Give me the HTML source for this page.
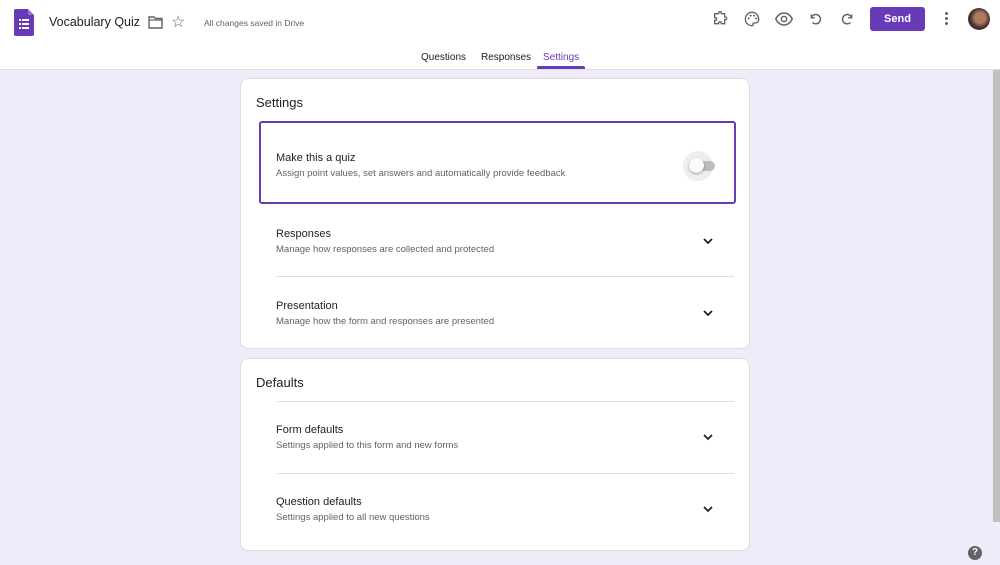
<!DOCTYPE html>
<html><head><style>
*{box-sizing:border-box;margin:0;padding:0}
body{width:1000px;height:565px;overflow:hidden;background:#f0ebf8;font-family:"Liberation Sans",Arial,sans-serif;color:#202124;position:relative}
.hdr{position:absolute;left:0;top:0;width:1000px;height:70px;background:#fff;border-bottom:1px solid #e0e0e0}
.abs{position:absolute}
.card{position:absolute;left:240px;width:510px;background:#fff;border:1px solid #dadce0;border-radius:8px}
.t{font-size:11px;color:#202124;position:absolute}
.s{font-size:9.5px;color:#5f6368;position:absolute}
.chev{position:absolute;width:14px;height:14px}
.div{position:absolute;left:36px;width:457px;height:1px;background:#e0e0e0}
</style></head><body>
<div class="hdr">
<svg class="abs" style="left:14px;top:9px" width="20" height="27" viewBox="0 0 20 27"><path d="M2 0h12l6 6v19a2 2 0 0 1-2 2H2a2 2 0 0 1-2-2V2a2 2 0 0 1 2-2z" fill="#673ab7"/><path d="M14 0v6h6z" fill="#9575cd"/><g fill="#fff"><rect x="5" y="10" width="2" height="2"/><rect x="8" y="10" width="7" height="2"/><rect x="5" y="14" width="2" height="2"/><rect x="8" y="14" width="7" height="2"/><rect x="5" y="18" width="2" height="2"/><rect x="8" y="18" width="7" height="2"/></g></svg>
<div class="abs" style="left:49px;top:15px;font-size:12.5px">Vocabulary Quiz</div>
<svg class="abs" style="left:148px;top:16px" width="15" height="13" viewBox="0 0 15 13"><path d="M1 1h5l1.5 1.5H14v9.5H1z" fill="none" stroke="#5f6368" stroke-width="1.4"/><path d="M1 4h13" stroke="#5f6368" stroke-width="1.2"/></svg>
<div class="abs" style="left:171px;top:12px;font-size:16px;color:#5f6368">☆</div>
<div class="abs" style="left:204px;top:18px;font-size:8.5px;color:#5f6368">All changes saved in Drive</div>
<svg class="abs" style="left:712px;top:11px" width="16" height="16" viewBox="0 0 24 24"><path d="M10 3a2 2 0 0 1 4 0v1h5v5h1a2 2 0 0 1 0 4h-1v6h-5v-1a2 2 0 0 0-4 0v1H4v-5h1a2 2 0 0 0 0-4H4V4h6z" fill="none" stroke="#5f6368" stroke-width="2"/></svg>
<svg class="abs" style="left:744px;top:11px" width="16" height="16" viewBox="0 0 24 24"><path d="M12 2a10 10 0 0 0 0 20c1.5 0 2-1 1.5-2s0-2 1.5-2h3a5 5 0 0 0 4-5C22 6 17.5 2 12 2z" fill="none" stroke="#5f6368" stroke-width="2"/><circle cx="7" cy="11" r="1.5" fill="#5f6368"/><circle cx="10" cy="7" r="1.5" fill="#5f6368"/><circle cx="15" cy="7" r="1.5" fill="#5f6368"/><circle cx="18" cy="11" r="1.5" fill="#5f6368"/></svg>
<svg class="abs" style="left:775px;top:12px" width="18" height="14" viewBox="0 0 24 18"><path d="M1 9C4 3 8 1 12 1s8 2 11 8c-3 6-7 8-11 8S4 15 1 9z" fill="none" stroke="#5f6368" stroke-width="2"/><circle cx="12" cy="9" r="3.5" fill="none" stroke="#5f6368" stroke-width="2"/></svg>
<svg class="abs" style="left:809px;top:12px" width="14" height="14" viewBox="0 0 24 24"><path d="M4 4v6h6M4 10a8 8 0 1 1 2 8" fill="none" stroke="#5f6368" stroke-width="2.4"/></svg>
<svg class="abs" style="left:840px;top:12px" width="14" height="14" viewBox="0 0 24 24"><path d="M20 4v6h-6M20 10a8 8 0 1 0-2 8" fill="none" stroke="#5f6368" stroke-width="2.4"/></svg>
<div class="abs" style="left:870px;top:7px;width:55px;height:24px;background:#673ab7;border-radius:3px;color:#fff;font-size:11px;font-weight:bold;text-align:center;line-height:24px">Send</div>
<div class="abs" style="left:945px;top:12px;width:3px;height:3px;background:#5f6368;border-radius:50%;box-shadow:0 5px 0 #5f6368,0 10px 0 #5f6368"></div>
<div class="abs" style="left:968px;top:8px;width:22px;height:22px;border-radius:50%;background:radial-gradient(circle at 55% 45%,#b07a60 0 30%,#3a2a28 60%,#5a6e88)"></div>
<div class="abs" style="left:421px;top:52px;font-size:10px">Questions</div>
<div class="abs" style="left:481px;top:52px;font-size:10px">Responses</div>
<div class="abs" style="left:543px;top:52px;font-size:10px;color:#673ab7">Settings</div>
<div class="abs" style="left:537px;top:66px;width:48px;height:3px;background:#673ab7;border-radius:2px 2px 0 0"></div>
</div>
<div class="abs" style="left:993px;top:70px;width:7px;height:452px;background:#c1c1c1"></div>
<div class="card" style="top:78px;height:271px">
<div class="abs" style="left:15px;top:16px;font-size:13px">Settings</div>
<div class="abs" style="left:18px;top:42px;width:477px;height:83px;border:2px solid #673ab7;border-radius:3px"></div>
<div class="t" style="left:35px;top:73px">Make this a quiz</div>
<div class="s" style="left:35px;top:89px">Assign point values, set answers and automatically provide feedback</div>
<div class="abs" style="left:442px;top:72px;width:30px;height:30px;border-radius:50%;background:#eeeeee"></div>
<div class="abs" style="left:452px;top:82px;width:22px;height:10px;border-radius:5px;background:#bdbdbd"></div>
<div class="abs" style="left:448px;top:79px;width:15px;height:15px;border-radius:50%;background:#fafafa;box-shadow:0 1px 2px rgba(0,0,0,.35)"></div>
<div class="t" style="left:35px;top:149px">Responses</div>
<div class="s" style="left:35px;top:165px">Manage how responses are collected and protected</div>
<svg class="chev" style="left:460px;top:155px" viewBox="0 0 14 14"><path d="M3 5l4 4 4-4" fill="none" stroke="#202124" stroke-width="1.8"/></svg>
<div class="div" style="top:197px"></div>
<div class="t" style="left:35px;top:221px">Presentation</div>
<div class="s" style="left:35px;top:237px">Manage how the form and responses are presented</div>
<svg class="chev" style="left:460px;top:227px" viewBox="0 0 14 14"><path d="M3 5l4 4 4-4" fill="none" stroke="#202124" stroke-width="1.8"/></svg>
</div>
<div class="card" style="top:358px;height:193px">
<div class="abs" style="left:15px;top:16px;font-size:13px">Defaults</div>
<div class="div" style="top:42px"></div>
<div class="t" style="left:35px;top:65px">Form defaults</div>
<div class="s" style="left:35px;top:81px">Settings applied to this form and new forms</div>
<svg class="chev" style="left:460px;top:71px" viewBox="0 0 14 14"><path d="M3 5l4 4 4-4" fill="none" stroke="#202124" stroke-width="1.8"/></svg>
<div class="div" style="top:114px"></div>
<div class="t" style="left:35px;top:137px">Question defaults</div>
<div class="s" style="left:35px;top:153px">Settings applied to all new questions</div>
<svg class="chev" style="left:460px;top:143px" viewBox="0 0 14 14"><path d="M3 5l4 4 4-4" fill="none" stroke="#202124" stroke-width="1.8"/></svg>
</div>
<div class="abs" style="left:968px;top:546px;width:14px;height:14px;border-radius:50%;background:#5f6368;color:#fff;font-size:10px;font-weight:bold;text-align:center;line-height:14px">?</div>
</body></html>
